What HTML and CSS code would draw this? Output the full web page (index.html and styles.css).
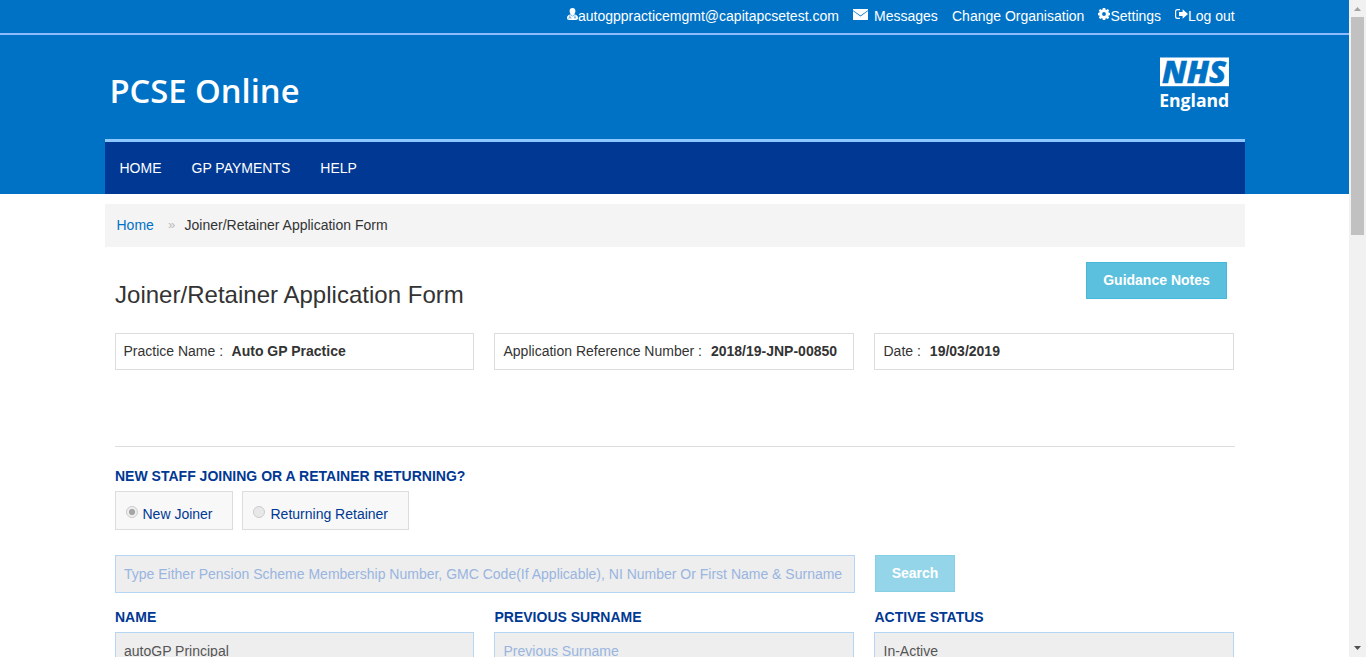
FILE: index.html
```html
<!DOCTYPE html>
<html lang="en">
<head>
<meta charset="utf-8">
<title>Joiner/Retainer Application Form</title>
<link rel="stylesheet" href="styles.css">
</head>
<body>
<div class="window">
  <div class="page">
    <header class="header">
      <div class="topbar">
        <a class="top-link user"><svg class="icon-user" viewBox="0 0 11 12" width="11" height="12"><path fill="#fff" d="M5.500 0C3.600 0 2.600 1.200 2.600 3c0 1.600.6 2.700 1.300 3.300C1.500 6.700 0 7.800 0 10c0 1.300.8 2 2 2h7c1.200 0 2-.7 2-2 0-2.200-1.500-3.300-3.900-3.700.7-.6 1.300-1.700 1.300-3.300C8.400 1.200 7.400 0 5.500 0z"/><path fill="none" stroke="#0072c6" stroke-opacity=".75" stroke-width=".7" d="M2.900 7.200v2M1.900 10.900V10c0-1 2.100-1 2.100 0v.9M3.900 6.700l1.600 1.600 1.600-1.600M8 7.200v1.700"/><circle cx="8" cy="9.600" r=".7" fill="none" stroke="#0072c6" stroke-opacity=".75" stroke-width=".6"/></svg><span>autogppracticemgmt@capitapcsetest.com</span></a>
        <a class="top-link messages"><svg class="icon-mail" viewBox="0 0 15 11" width="15" height="11"><path fill="#fff" d="M0 0h15v1.200L7.500 6.600 0 1.200zM0 2.100l7.500 5.400L15 2.100V11H0z"/></svg><span>Messages</span></a>
        <a class="top-link change">Change Organisation</a>
        <a class="top-link settings"><svg class="icon-gear" viewBox="0 0 12 12" width="12" height="12"><path fill="#fff" fill-rule="evenodd" d="M4.800 0h2.400l.3 1.500.8.400L9.700 1 11.200 2.500l-.9 1.300.3.800 1.400.3v2.300l-1.400.3-.3.800.9 1.300-1.500 1.500-1.400-.9-.8.400L7.200 12H4.800l-.3-1.400-.8-.4-1.400.9L.8 9.600l.9-1.300-.3-.8L0 7.200V4.900l1.400-.3.3-.8L.8 2.500 2.300 1l1.400.9.8-.4zM6 4.100a1.900 1.900 0 1 0 0 3.800 1.900 1.900 0 0 0 0-3.800z"/></svg><span>Settings</span></a>
        <a class="top-link logout"><svg class="icon-out" viewBox="0 0 13 11" width="13" height="11"><path fill="none" stroke="#fff" stroke-width="1.200" d="M5 .6H2.500C1.300.6.6 1.300.6 2.500v5c0 1.200.7 1.900 1.900 1.900H5"/><path fill="#fff" d="M4 3h3.600V.3L13 5 7.600 9.700V7H4z"/></svg><span>Log out</span></a>
      </div>
      <div class="container brand">
        <svg class="logo" width="200" height="40" viewBox="0 0 200 40"><text x="4.500" y="29" textLength="190" lengthAdjust="spacingAndGlyphs" class="logo-text">PCSE Online</text></svg>
        <svg class="nhs" width="70" height="60" viewBox="0 0 70 60"><rect x="0" y="3.500" width="69" height="28.700" fill="#fff"/><text x="2" y="28.900" textLength="64" lengthAdjust="spacingAndGlyphs" class="nhs-text">NHS</text><text x="-.8" y="52.600" textLength="70" lengthAdjust="spacingAndGlyphs" class="england">England</text></svg>
      </div>
      <nav class="container nav"><a>HOME</a><a>GP PAYMENTS</a><a>HELP</a></nav>
    </header>
    <div class="container crumbs"><a class="crumb-home">Home</a><span class="crumb-sep">»</span><span>Joiner/Retainer Application Form</span></div>
    <main class="container main">
      <div class="title-row"><h1 class="title">Joiner/Retainer Application Form</h1><button class="btn guidance">Guidance Notes</button></div>
      <div class="columns">
        <div class="info info-first">Practice Name :<b>Auto GP Practice</b></div>
        <div class="info">Application Reference Number :<b>2018/19-JNP-00850</b></div>
        <div class="info">Date :<b>19/03/2019</b></div>
      </div>
      <div class="rule"></div>
      <div class="label question">NEW STAFF JOINING OR A RETAINER RETURNING?</div>
      <div class="radios">
        <div class="radio joiner"><span class="dot dot-on"></span><span>New Joiner</span></div>
        <div class="radio returning"><span class="dot"></span><span>Returning Retainer</span></div>
      </div>
      <div class="search-row">
        <div class="field search-field placeholder">Type Either Pension Scheme Membership Number, GMC Code(If Applicable), NI Number Or First Name &amp; Surname</div>
        <button class="btn search">Search</button>
      </div>
      <div class="columns fields">
        <div><div class="label">NAME</div><div class="field">autoGP Principal</div></div>
        <div><div class="label label-inset">PREVIOUS SURNAME</div><div class="field field-inset placeholder">Previous Surname</div></div>
        <div><div class="label label-inset">ACTIVE STATUS</div><div class="field field-inset">In-Active</div></div>
      </div>
    </main>
  </div>
  <div class="scrollbar">
    <svg width="17" height="17" viewBox="0 0 17 17"><path fill="#a3a3a3" d="M5 11l3.500-4 3.500 4z"/></svg>
    <div class="thumb"></div>
    <svg class="down" width="17" height="17" viewBox="0 0 17 17"><path fill="#505050" d="M5 6l3.500 4L12 6z"/></svg>
  </div>
</div>
</body>
</html>
```

FILE: styles.css
```css
* { box-sizing: border-box; }
body { margin: 0; overflow: hidden; background: #fff; color: #333; font: 14px/20px "Liberation Sans", Arial, sans-serif; }
.window { display: flex; width: 1366px; height: 657px; overflow: hidden; }
.page { width: 1349px; height: 657px; overflow: hidden; }
.container { width: 1140px; margin-left: 105px; }
.header { height: 194px; background: #0072c6; }
.topbar { display: flex; height: 35px; padding: 6px 0 0 567px; border-bottom: 2px solid #8dbbfb; color: #fff; white-space: nowrap; }
.top-link { display: flex; align-items: flex-start; }
.user { width: 285.500px; }
.messages { width: 99.500px; gap: 6.500px; }
.change { width: 146px; }
.settings { width: 76.500px; gap: .5px; }
.logout { gap: .5px; }
.icon-user, .icon-gear { margin-top: 2px; }
.icon-mail { margin-top: 3px; }
.icon-out { margin-top: 3px; }
.brand { display: flex; justify-content: space-between; height: 104px; padding: 19px 15px 0 0; }
.logo { margin-top: 20px; overflow: visible; }
.nhs { overflow: visible; }
.logo-text { font: 600 32.500px "Open Sans", sans-serif; fill: #fff; }
.nhs-text { font: italic 800 30px "Open Sans", sans-serif; fill: #0072c6; stroke: #0072c6; stroke-width: .4px; }
.england { font: 700 17.500px "Open Sans", sans-serif; fill: #fff; }
.nav { display: flex; height: 55px; border-top: 3px solid #8cc8ff; background: #003893; color: #fff; padding: 16px 14.500px; gap: 30px; }
.crumbs { display: flex; height: 43px; margin-top: 10px; padding: 11px 11.500px; background: #f4f4f4; }
.crumb-home { width: 51.500px; color: #0072c6; }
.crumb-sep { width: 16.500px; color: #bbb; font-size: 13px; }
.main { padding: 0 11px 0 10px; }
.title-row { display: flex; justify-content: space-between; height: 86px; padding: 15px 7px 0 0; }
.title { margin: 18px 0 0; font-size: 24px; line-height: 30px; font-weight: 400; letter-spacing: .02px; }
.btn { height: 37px; padding: 0 0 2px; border: 1px solid #46b8da; background: #5bc0de; color: #fff; font: bold 14px "Liberation Sans", Arial, sans-serif; }
.guidance { width: 141px; }
.columns { display: grid; grid-template-columns: 359px 360px 360px; gap: 20px; }
.info { height: 37px; padding: 7px 8.500px; border: 1px solid #ddd; white-space: nowrap; }
.info-first { padding-left: 7.500px; }
.info b { margin-left: 9px; }
.info-first b { margin-left: 8.500px; }
.rule { width: 1120px; height: 1px; margin-top: 76px; background: #ddd; }
.label { height: 25px; color: #003893; font-weight: bold; white-space: nowrap; }
.label-inset { padding-left: .5px; }
.question { margin-top: 19px; letter-spacing: .01px; }
.radios { display: flex; gap: 9px; }
.radio { display: flex; height: 39px; padding: 12px 0 0 10px; border: 1px solid #ddd; background: #f8f8f8; color: #003893; gap: 5px; }
.joiner { width: 118px; gap: 4.500px; }
.returning { width: 167px; gap: 5.500px; }
.dot { width: 12px; height: 12px; margin-top: 2px; border: 1px solid #ccc; border-radius: 50%; background: #e8e8e8; }
.dot-on { background: radial-gradient(circle, #a6a6a6 0 2.800px, #eee 3.400px); }
.search-row { display: flex; gap: 20px; margin-top: 25px; }
.field { height: 38px; padding: 8px; border: 1px solid #b5d5f5; background: #eee; color: #555; white-space: nowrap; }
.field-inset { padding-left: 8.500px; }
.search-field { width: 740px; }
.placeholder { color: #99b5e0; }
.search { width: 80px; opacity: .65; }
.fields { margin-top: 14px; }
.scrollbar { display: flex; flex-direction: column; width: 17px; background: #f1f1f1; }
.thumb { width: 13px; height: 218px; margin-left: 2px; background: #c1c1c1; }
.down { margin-top: auto; }
```
